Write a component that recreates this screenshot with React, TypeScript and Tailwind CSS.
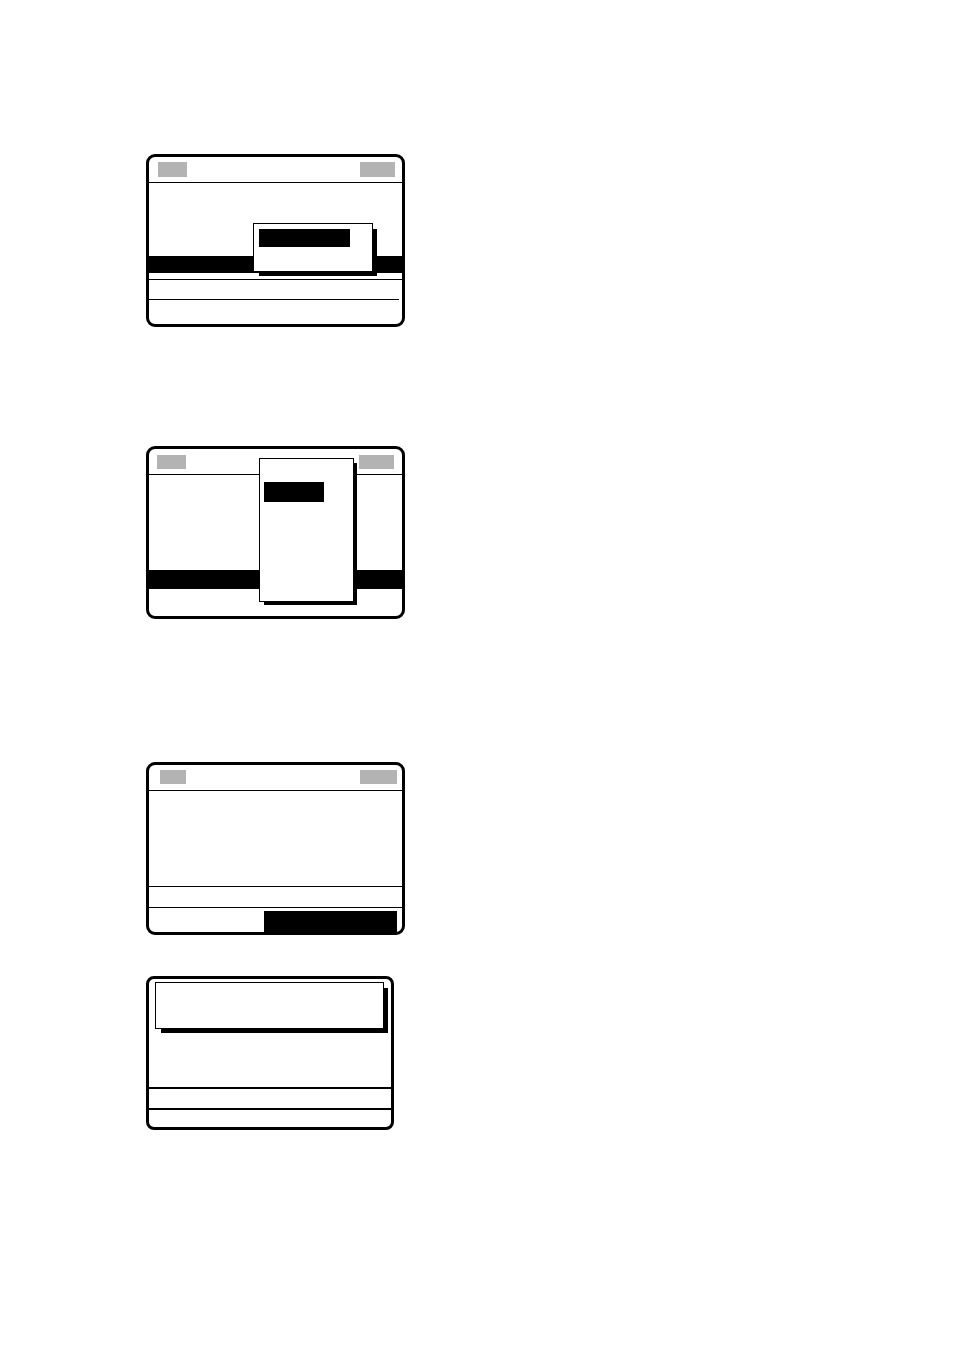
function Gray({ w, h }: { w: string; h: string }) {
  return <div className={`${w} ${h} bg-[#b3b3b3]`} />;
}

function App() {
  return (
    <div className="w-[954px] min-h-[1350px] bg-white pt-[154px] pl-[146px] flex flex-col items-start">
      {/* screen 1 */}
      <div className="relative w-[259px] h-[173px] border-[3px] border-black rounded-[9px] flex flex-col">
        <div className="h-[26px] border-b border-black flex justify-between items-start pt-[5px] pl-[9px] pr-[7px]">
          <Gray w="w-[29px]" h="h-[15px]" />
          <Gray w="w-[35px]" h="h-[15px]" />
        </div>
        <div className="h-[73px]" />
        <div className="h-[17px] bg-black" />
        <div className="h-[6px]" />
        <div className="h-px bg-black" />
        <div className="h-[19px]" />
        <div className="h-px bg-black mr-[3px]" />
        <div className="flex-1" />
        <div className="absolute left-[104px] top-[66px] w-[120px] h-[49px] bg-white border border-black shadow-[5px_5px_0_-1px_#000] pt-[5px] pl-[5px]">
          <div className="w-[91px] h-[18px] bg-black" />
        </div>
      </div>

      {/* screen 2 */}
      <div className="relative mt-[119px] w-[259px] h-[173px] border-[3px] border-black rounded-[9px] flex flex-col">
        <div className="h-[26px] border-b border-black flex justify-between items-start pt-[6px] pl-[8px] pr-[8px]">
          <Gray w="w-[29px]" h="h-[14px]" />
          <Gray w="w-[35px]" h="h-[14px]" />
        </div>
        <div className="h-[95px]" />
        <div className="h-[19px] bg-black" />
        <div className="flex-1" />
        <div className="absolute left-[110px] top-[9px] w-[95px] h-[144px] bg-white border border-black shadow-[4px_4px_0_-1px_#000] pt-[23px] pl-[4px]">
          <div className="w-[60px] h-[20px] bg-black" />
        </div>
      </div>

      {/* screen 3 */}
      <div className="mt-[143px] w-[259px] h-[173px] border-[3px] border-black rounded-[9px] flex flex-col">
        <div className="h-[26px] border-b border-black flex justify-between items-start pt-[5px] pl-[11px] pr-[5px]">
          <Gray w="w-[26px]" h="h-[14px]" />
          <Gray w="w-[37px]" h="h-[14px]" />
        </div>
        <div className="h-[95px]" />
        <div className="h-px bg-black" />
        <div className="h-[20px]" />
        <div className="h-px bg-black" />
        <div className="flex-1 flex justify-end items-end pr-[5px]">
          <div className="w-[133px] h-[21px] bg-black" />
        </div>
      </div>

      {/* screen 4 */}
      <div className="mt-[41px] w-[248px] h-[154px] border-[3px] border-black rounded-[8px] flex flex-col">
        <div className="mt-[3px] ml-[6px] w-[229px] h-[47px] bg-white border-[1.5px] border-black shadow-[5px_5px_0_-1px_#000]" />
        <div className="h-[58px]" />
        <div className="h-[2px] bg-black" />
        <div className="h-[19px]" />
        <div className="h-[2px] bg-black" />
        <div className="flex-1" />
      </div>
    </div>
  );
}

export default App;
